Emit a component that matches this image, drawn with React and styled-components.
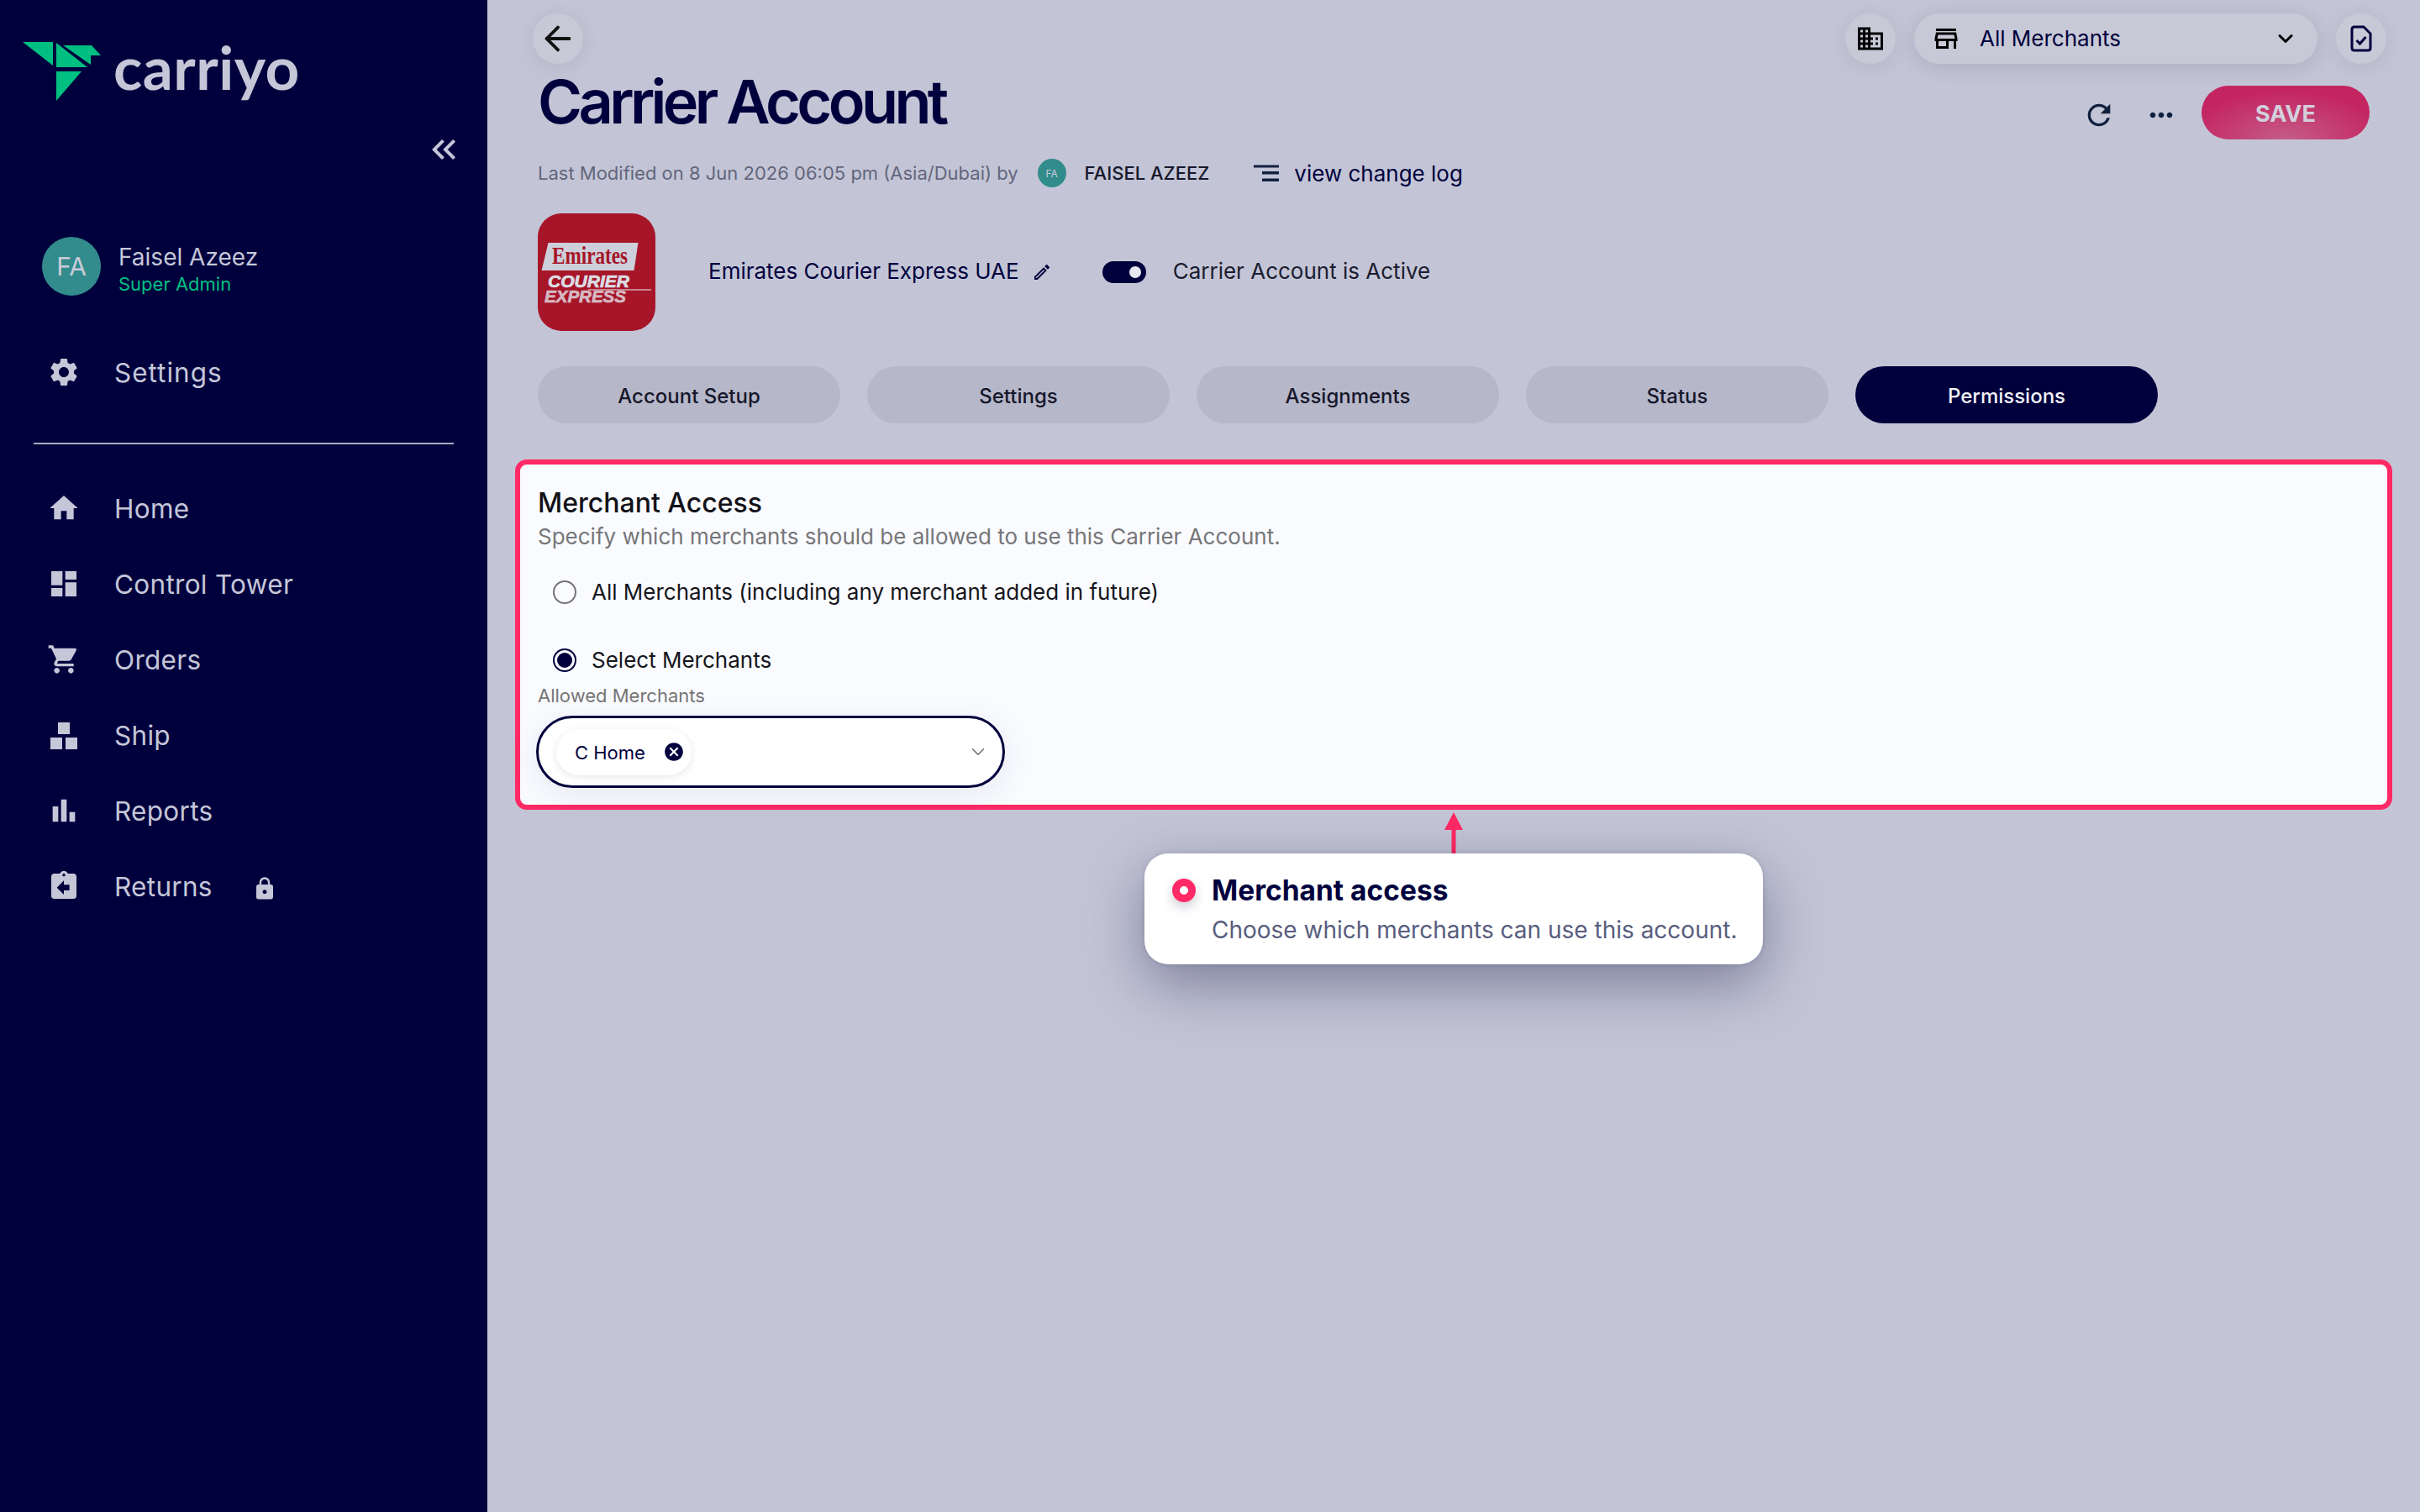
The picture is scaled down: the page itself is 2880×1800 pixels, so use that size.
import React from 'react';
import styled, { createGlobalStyle } from 'styled-components';
import {
  MdSettings, MdHome, MdDashboard, MdShoppingCart, MdBarChart, MdAssignmentReturn, MdLock,
  MdKeyboardDoubleArrowLeft, MdDomain, MdOutlineStore, MdRefresh, MdMoreHoriz, MdOutlineEdit, MdCancel,
} from 'react-icons/md';
import { ArrowLeft, ChevronDown } from 'lucide-react';

const GlobalStyle = createGlobalStyle`
  html, body { margin: 0; padding: 0; height: 100%; background: #c3c5d6; }
  * { box-sizing: border-box; }
  body { font-family: Inter, "Liberation Sans", sans-serif; }
`;

const Page = styled.div`
  display: flex;
  width: 2880px;
  height: 1800px;
  overflow: hidden;
  background: #c3c5d6;
`;

const Sidebar = styled.aside`
  width: 580px;
  flex-shrink: 0;
  background: #00003d;
  color: #c5c7d8;
  padding-top: 50px;
`;

const Brand = styled.div`
  display: flex;
  align-items: flex-start;
  height: 70px;
  padding-left: 27px;
`;

const Wordmark = styled.span`
  margin-left: 14px;
  margin-top: -10px;
  font-family: Lato, sans-serif;
  font-size: 71px;
  line-height: 80px;
  font-weight: 700;
  letter-spacing: 0.5px;
  color: #c5c7d8;
`;

const Collapse = styled.div`
  display: flex;
  justify-content: flex-end;
  padding-right: 28px;
  margin-top: 34px;
  height: 48px;
`;

const User = styled.div`
  display: flex;
  align-items: center;
  margin-top: 80px;
  padding-left: 50px;
  gap: 21px;
`;

const Avatar = styled.div`
  width: ${p => p.$size}px;
  height: ${p => p.$size}px;
  border-radius: 50%;
  flex-shrink: 0;
  background: #328c8c;
  color: #c9cbd8;
  font-size: ${p => p.$font}px;
  display: flex;
  align-items: center;
  justify-content: center;
`;

const MetaAvatar = styled(Avatar)`
  margin-left: 23px;
`;

const UserName = styled.div`
  font-size: 28px;
  line-height: 36px;
  margin-top: 6px;
`;

const UserRole = styled.div`
  font-size: 22px;
  line-height: 28px;
  color: #00c081;
`;

const NavRow = styled.div`
  display: flex;
  align-items: center;
  height: 90px;
  padding-left: 56px;
  gap: 40px;
  font-size: 31.5px;
  letter-spacing: 0.3px;
  color: #c5c7d8;
  svg { flex-shrink: 0; }
`;

const SettingsRow = styled(NavRow)`
  margin-top: 46px;
  letter-spacing: 1px;
`;

const Divider = styled.hr`
  border: 0;
  height: 2px;
  margin: 39px 40px 31px;
  background: #a9abc0;
`;

const LockMark = styled.span`
  display: flex;
  margin-left: 7px;
  margin-top: 6px;
`;

const Main = styled.main`
  position: relative;
  flex: 1;
  padding: 16px 33px 0;
  min-width: 0;
`;

const TopBar = styled.div`
  display: flex;
  justify-content: space-between;
  padding: 0 7px 0 21px;
`;

const TopRight = styled.div`
  display: flex;
  gap: 22px;
`;

const RoundButton = styled.div`
  width: 60px;
  height: 60px;
  border-radius: 50%;
  background: #c8c9d6;
  box-shadow: 0 4px 24px rgba(0, 0, 50, 0.08);
  display: flex;
  align-items: center;
  justify-content: center;
  color: ${p => p.$color || '#000'};
`;

const MerchantSelect = styled.div`
  width: 480px;
  height: 60px;
  border-radius: 30px;
  background: #c8c9d6;
  box-shadow: 0 4px 24px rgba(0, 0, 50, 0.12);
  display: flex;
  align-items: center;
  padding: 0 24px 0 20px;
  font-size: 26px;
  color: #00003d;
  svg { color: #000; flex-shrink: 0; }
`;

const MerchantLabel = styled.span`
  flex: 1;
  margin-left: 22px;
  margin-top: -2px;
`;

const TitleRow = styled.div`
  display: flex;
  justify-content: space-between;
  align-items: flex-end;
  height: 90px;
  padding: 0 27px;
`;

const Title = styled.h1`
  margin: 0;
  font-size: 72px;
  line-height: 90px;
  font-weight: 580;
  letter-spacing: -4.6px;
  color: #00003d;
`;

const Actions = styled.div`
  display: flex;
  align-items: center;
  color: #12203f;
`;

const IconSlot = styled.span`
  display: flex;
  margin-top: 5px;
  margin-right: ${p => p.$gap}px;
`;

const SaveButton = styled.div`
  width: 200px;
  height: 64px;
  padding-top: 2px;
  border-radius: 32px;
  background: radial-gradient(ellipse 60% 90% at 50% 100%, #c55c87 0%, #c42561 100%);
  color: #d3cfdc;
  font-size: 27px;
  font-weight: 700;
  display: flex;
  align-items: center;
  justify-content: center;
`;

const MetaRow = styled.div`
  display: flex;
  align-items: center;
  margin-top: 23px;
  padding-left: 27px;
  height: 34px;
  font-size: 22px;
  color: #63667c;
`;

const MetaAuthor = styled.span`
  margin-left: 22px;
  font-weight: 500;
  color: #16172b;
`;

const ChangeLog = styled.span`
  display: flex;
  align-items: center;
  margin-left: 53px;
  gap: 18px;
  font-size: 26px;
  color: #00003d;
`;

const CarrierRow = styled.div`
  display: flex;
  align-items: center;
  margin-top: 31px;
  padding-left: 27px;
  height: 140px;
  font-size: 26px;
  color: #00003d;
`;

const CarrierName = styled.span`
  margin-left: 63px;
  margin-top: -3px;
`;

const EditMark = styled.span`
  display: flex;
  margin-left: 15px;
`;

const Toggle = styled.span`
  position: relative;
  width: 52px;
  height: 26px;
  margin-left: 60px;
  border-radius: 13px;
  background: #00003d;
  &::after {
    content: '';
    position: absolute;
    right: 6px;
    top: 6px;
    width: 14px;
    height: 14px;
    border-radius: 50%;
    background: #e8e8f0;
  }
`;

const ToggleLabel = styled.span`
  margin-left: 32px;
  margin-top: -3px;
  color: #1b1c30;
`;

const Tabs = styled.div`
  display: flex;
  gap: 32px;
  margin-top: 42px;
  padding-left: 27px;
`;

const Tab = styled.div`
  width: 360px;
  height: 68px;
  padding-top: 2px;
  border-radius: 34px;
  background: ${p => (p.$active ? '#00003d' : '#b6b7c9')};
  color: ${p => (p.$active ? '#f2f2f7' : '#16172b')};
  font-size: 24px;
  font-weight: 500;
  display: flex;
  align-items: center;
  justify-content: center;
`;

const Panel = styled.section`
  height: 417px;
  margin-top: 43px;
  border: 6px solid #ff2965;
  border-radius: 14px;
  background: #fafbff;
  padding: 24px 21px 0;
`;

const PanelTitle = styled.h2`
  margin: 0;
  font-size: 32px;
  line-height: 44px;
  font-weight: 500;
  color: #111118;
`;

const PanelHint = styled.p`
  margin: 0;
  font-size: 26px;
  line-height: 36px;
  color: #767679;
`;

const RadioRow = styled.label`
  display: flex;
  align-items: center;
  height: 56px;
  margin-top: ${p => p.$gap}px;
  padding-left: 18px;
  gap: 18px;
  font-size: 26px;
  color: #15151c;
`;

const RadioText = styled.span`
  margin-top: -2px;
`;

const Radio = styled.span`
  width: 28px;
  height: 28px;
  border-radius: 50%;
  border: 2px solid ${p => (p.$checked ? '#00003d' : '#757575')};
  display: flex;
  align-items: center;
  justify-content: center;
  &::after {
    content: '';
    display: ${p => (p.$checked ? 'block' : 'none')};
    width: 18px;
    height: 18px;
    border-radius: 50%;
    background: #00003d;
  }
`;

const FieldLabel = styled.div`
  font-size: 22px;
  line-height: 28px;
  color: #757575;
`;

const Select = styled.div`
  display: flex;
  align-items: center;
  justify-content: space-between;
  width: 558px;
  height: 86px;
  margin-top: 10px;
  margin-left: -2px;
  padding: 0 16px 0 21px;
  border: 3px solid #00003d;
  border-radius: 43px;
  background: #fff;
  box-shadow: 0 8px 40px rgba(0, 0, 60, 0.08);
  svg { flex-shrink: 0; }
`;

const Chip = styled.div`
  display: flex;
  align-items: center;
  height: 55px;
  width: 161px;
  padding: 0 8px 0 22px;
  border-radius: 28px;
  background: #fff;
  box-shadow: 0 2px 10px rgba(0, 0, 60, 0.1);
  font-size: 22px;
  color: #00003d;
  justify-content: space-between;
`;

const ChipText = styled.span`
  margin-top: 2px;
`;

const Callout = styled.div`
  position: absolute;
  left: 782px;
  top: 1016px;
  width: 736px;
  height: 132px;
  display: flex;
  gap: 19px;
  padding: 26px 0 0 33px;
  border-radius: 28px;
  background: #fff;
  box-shadow: 0 24px 70px rgba(0, 0, 50, 0.36), 0 0 6px rgba(0, 0, 50, 0.12);
`;

const CalloutDot = styled.span`
  width: 28px;
  height: 28px;
  margin-top: 4px;
  border-radius: 50%;
  border: 9px solid #ff2965;
  background: #fff;
  flex-shrink: 0;
  box-shadow: 0 6px 14px rgba(0, 0, 50, 0.2);
`;

const CalloutTitle = styled.div`
  font-size: 33.5px;
  line-height: 36px;
  font-weight: 700;
  color: #00003d;
`;

const CalloutText = styled.div`
  margin-top: 11px;
  font-size: 28px;
  line-height: 36px;
  color: #585d7e;
`;

const Pointer = styled.svg`
  position: absolute;
  left: 1137px;
  top: 967px;
`;

function BirdLogo() {
  return (
    <svg width="94" height="70" viewBox="0 0 94 70">
      <path fill="#00bf80" d="M0 0H36V28Z M40 1V30H77Z M48 4H82L93 16H81V27Z M40 35H70L40 70Z" />
    </svg>
  );
}

function ShipIcon() {
  return (
    <svg width="40" height="40" viewBox="0 0 40 40" fill="currentColor">
      <rect x="13" y="5" width="14" height="14" />
      <rect x="4" y="23" width="14" height="14" />
      <rect x="22" y="23" width="14" height="14" />
    </svg>
  );
}

function ListLinesIcon() {
  return (
    <svg width="30" height="20" viewBox="0 0 30 20" fill="#12203f">
      <rect x="0" y="0.5" width="30" height="3" />
      <rect x="10" y="8" width="20" height="3.5" />
      <rect x="10" y="16.5" width="20" height="3.5" />
    </svg>
  );
}

function DocCheckIcon() {
  return (
    <svg width="26" height="32" viewBox="0 0 26 32" fill="none" stroke="#00003d" strokeWidth="3">
      <path d="M5 2H16L24 10V27Q24 30 21 30H5Q2 30 2 27V5Q2 2 5 2Z" />
      <path d="M7.5 18L11.5 22L18.5 14" />
    </svg>
  );
}

const LogoTile = styled.svg`
  flex-shrink: 0;
  border-radius: 28px;
`;

function EmiratesLogo() {
  return (
    <LogoTile width="140" height="140" viewBox="0 0 140 140">
      <rect width="140" height="140" fill="#a71528" />
      <path fill="#cdcfda" d="M12.5 35H119.5L114.5 68H4.5Z" />
      <text x="62" y="60" textAnchor="middle" textLength="90" lengthAdjust="spacingAndGlyphs"
        fontFamily="Liberation Serif, serif" fontSize="29" fontWeight="700" fill="#a71528">Emirates</text>
      <text x="12" y="88" textLength="97" lengthAdjust="spacingAndGlyphs" stroke="#dcdde5" strokeWidth="0.7"
        fontFamily="Liberation Sans, sans-serif" fontSize="20" fontWeight="700" fontStyle="italic" fill="#dcdde5">COURIER</text>
      <text x="8" y="106" textLength="97" lengthAdjust="spacingAndGlyphs" stroke="#d6b9c2" strokeWidth="0.7"
        fontFamily="Liberation Sans, sans-serif" fontSize="20" fontWeight="700" fontStyle="italic" fill="#d6b9c2">EXPRESS</text>
      <path stroke="#c9818f" strokeWidth="2" d="M60 91H135" />
    </LogoTile>
  );
}

const navItems = [
  { label: 'Home', icon: <MdHome size={40} /> },
  { label: 'Control Tower', icon: <MdDashboard size={40} /> },
  { label: 'Orders', icon: <MdShoppingCart size={40} /> },
  { label: 'Ship', icon: <ShipIcon /> },
  { label: 'Reports', icon: <MdBarChart size={40} /> },
  { label: 'Returns', icon: <MdAssignmentReturn size={40} />, locked: true },
];

const tabs = ['Account Setup', 'Settings', 'Assignments', 'Status', 'Permissions'];

export default function App() {
  return (
    <>
      <GlobalStyle />
      <Page>
        <Sidebar>
          <Brand>
            <BirdLogo />
            <Wordmark>carriyo</Wordmark>
          </Brand>
          <Collapse>
            <MdKeyboardDoubleArrowLeft size={48} />
          </Collapse>
          <User>
            <Avatar $size={70} $font={30}>FA</Avatar>
            <div>
              <UserName>Faisel Azeez</UserName>
              <UserRole>Super Admin</UserRole>
            </div>
          </User>
          <SettingsRow>
            <MdSettings size={40} />
            Settings
          </SettingsRow>
          <Divider />
          {navItems.map(item => (
            <NavRow key={item.label}>
              {item.icon}
              <span>{item.label}</span>
              {item.locked && <LockMark><MdLock size={30} /></LockMark>}
            </NavRow>
          ))}
        </Sidebar>

        <Main>
          <TopBar>
            <RoundButton><ArrowLeft size={46} color="#111" /></RoundButton>
            <TopRight>
              <RoundButton><MdDomain size={36} /></RoundButton>
              <MerchantSelect>
                <MdOutlineStore size={36} />
                <MerchantLabel>All Merchants</MerchantLabel>
                <ChevronDown size={28} strokeWidth={2.6} />
              </MerchantSelect>
              <RoundButton $color="#00003d"><DocCheckIcon /></RoundButton>
            </TopRight>
          </TopBar>

          <TitleRow>
            <Title>Carrier Account</Title>
            <Actions>
              <IconSlot $gap={34}><MdRefresh size={40} /></IconSlot>
              <IconSlot $gap={28}><MdMoreHoriz size={40} /></IconSlot>
              <SaveButton>SAVE</SaveButton>
            </Actions>
          </TitleRow>

          <MetaRow>
            Last Modified on 8 Jun 2026 06:05 pm (Asia/Dubai) by
            <MetaAvatar $size={34} $font={12}>FA</MetaAvatar>
            <MetaAuthor>FAISEL AZEEZ</MetaAuthor>
            <ChangeLog>
              <ListLinesIcon />
              view change log
            </ChangeLog>
          </MetaRow>

          <CarrierRow>
            <EmiratesLogo />
            <CarrierName>Emirates Courier Express UAE</CarrierName>
            <EditMark><MdOutlineEdit size={24} /></EditMark>
            <Toggle />
            <ToggleLabel>Carrier Account is Active</ToggleLabel>
          </CarrierRow>

          <Tabs>
            {tabs.map(t => (
              <Tab key={t} $active={t === 'Permissions'}>{t}</Tab>
            ))}
          </Tabs>

          <Panel>
            <PanelTitle>Merchant Access</PanelTitle>
            <PanelHint>Specify which merchants should be allowed to use this Carrier Account.</PanelHint>
            <RadioRow $gap={20}><Radio /><RadioText>All Merchants (including any merchant added in future)</RadioText></RadioRow>
            <RadioRow $gap={25}><Radio $checked /><RadioText>Select Merchants</RadioText></RadioRow>
            <FieldLabel>Allowed Merchants</FieldLabel>
            <Select>
              <Chip>
                <ChipText>C Home</ChipText>
                <MdCancel size={26} color="#00003d" />
              </Chip>
              <ChevronDown size={26} color="#666" strokeWidth={1.3} />
            </Select>
          </Panel>

          <Pointer width="26" height="52" viewBox="0 0 26 52">
            <path d="M13 0L24 21H2Z" fill="#ff2965" />
            <path d="M13 15V50" stroke="#ff2965" strokeWidth="5" strokeLinecap="round" />
          </Pointer>
          <Callout>
            <CalloutDot />
            <div>
              <CalloutTitle>Merchant access</CalloutTitle>
              <CalloutText>Choose which merchants can use this account.</CalloutText>
            </div>
          </Callout>
        </Main>
      </Page>
    </>
  );
}
